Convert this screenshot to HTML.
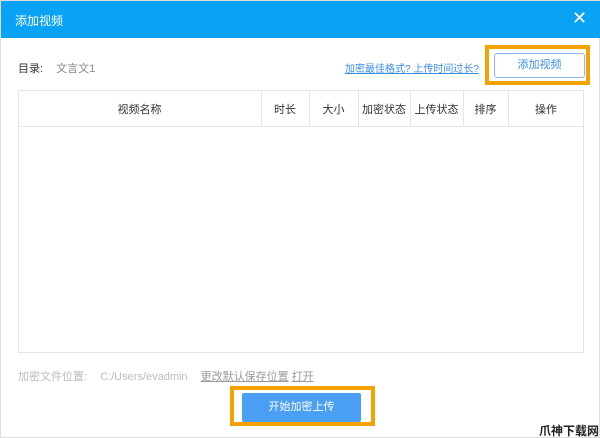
<!DOCTYPE html>
<html><head><meta charset="utf-8"><style>
*{margin:0;padding:0;box-sizing:border-box}
html{width:600px;height:438px;overflow:hidden}
body{width:600px;height:438px;background:#fff;font-family:"Liberation Sans","Noto Sans CJK SC",sans-serif;position:relative;overflow:hidden;border:1px solid #ddd;white-space:nowrap}
.a{position:absolute}
.hd{left:0;top:0;width:600px;height:37px;background:#0aa2f5}
</style></head><body>
<div class="a hd"></div>
<div class="a" style="left:14px;top:11px;color:#fff;font-size:12px">添加视频</div>
<div class="a" style="left:571px;top:7px;color:#fff;font-size:18px">✕</div>
<div class="a" style="left:17px;top:59px;font-size:11px;color:#333">目录: <span style="color:#888;margin-left:10px">文言文1</span></div>
<div class="a" style="left:344px;top:59px;font-size:10px;color:#3a8ee6;text-decoration:underline">加密最佳格式? 上传时间过长?</div>
<div class="a" style="left:484px;top:44px;width:105px;height:40px;border:4px solid #f5a100"></div>
<div class="a" style="left:493px;top:52px;width:91px;height:25px;border:1px solid #8ab8ec;border-radius:3px;color:#3a8ee6;font-size:11px;text-align:center;line-height:23px">添加视频</div>
<div class="a" style="left:17px;top:89px;width:566px;height:263px;border:1px solid #e4e4e4"></div>
<div class="a" style="left:17px;top:125px;width:566px;height:1px;background:#e4e4e4"></div>
<div class="a" style="left:260px;top:89px;width:1px;height:37px;background:#e4e4e4"></div>
<div class="a" style="left:308px;top:89px;width:1px;height:37px;background:#e4e4e4"></div>
<div class="a" style="left:357px;top:89px;width:1px;height:37px;background:#e4e4e4"></div>
<div class="a" style="left:409px;top:89px;width:1px;height:37px;background:#e4e4e4"></div>
<div class="a" style="left:462px;top:89px;width:1px;height:37px;background:#e4e4e4"></div>
<div class="a" style="left:507px;top:89px;width:1px;height:37px;background:#e4e4e4"></div>
<div class="a" style="top:100px;left:17px;width:566px;font-size:11px;color:#333">
<span class="a" style="left:0;width:243px;text-align:center">视频名称</span>
<span class="a" style="left:243px;width:48px;text-align:center">时长</span>
<span class="a" style="left:291px;width:49px;text-align:center">大小</span>
<span class="a" style="left:340px;width:52px;text-align:center">加密状态</span>
<span class="a" style="left:392px;width:53px;text-align:center">上传状态</span>
<span class="a" style="left:445px;width:45px;text-align:center">排序</span>
<span class="a" style="left:490px;width:76px;text-align:center">操作</span>
</div>
<div class="a" style="left:17px;top:367px;font-size:11px;color:#bbb">加密文件位置: <span style="margin-left:10px">C:/Users/evadmin</span> <span style="margin-left:10px;color:#999;text-decoration:underline">更改默认保存位置</span> <span style="color:#999;text-decoration:underline">打开</span></div>
<div class="a" style="left:229px;top:385px;width:145px;height:40px;border:4px solid #f5a100"></div>
<div class="a" style="left:241px;top:392px;width:119px;height:29px;background:#4a9ff5;border-radius:2px;color:#fff;font-size:11px;text-align:center;line-height:29px">开始加密上传</div>
<div class="a" style="left:538px;top:421px;font-size:12px;color:#222;font-weight:bold">爪神下载网</div>
</body></html>
